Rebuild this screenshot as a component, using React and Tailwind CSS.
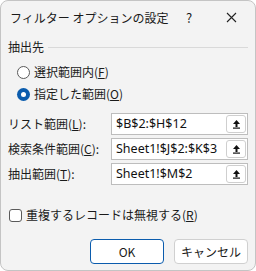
import React from 'react';

const font = { fontFamily: '"Noto Sans CJK JP", "Noto Sans", sans-serif' };

function UpButton() {
  return (
    <div className="w-[20px] h-[18px] mr-[1px] shrink-0 border border-[#cfcfcf] rounded-[3px] bg-white flex items-center justify-center">
      <svg width="9" height="10" viewBox="0 0 9 10">
        <path d="M4.5 1 L8 5 H5.5 V8 H3.5 V5 H1 Z" fill="#111" />
        <rect x="1" y="8.5" width="7" height="1.2" fill="#111" />
      </svg>
    </div>
  );
}

function RangeRow({ label, hot, rest, value }) {
  return (
    <div className="flex items-center h-[22px] mb-[3px]">
      <div className="w-[103px] text-[12px] text-[#1a1a1a] whitespace-nowrap">
        {label}(<span className="underline">{hot}</span>){rest}
      </div>
      <div className="flex-1 h-[22px] flex items-center bg-white border border-[#bdbdbd] pl-[4px]">
        <span className="flex-1 text-[12.5px] text-[#111] whitespace-nowrap overflow-hidden" style={{ fontFamily: '"Noto Sans", sans-serif' }}>{value}</span>
        <UpButton />
      </div>
    </div>
  );
}

export default function App() {
  return (
    <div className="w-[256px] h-[271px] bg-white" style={font}>
      <div className="w-full h-full bg-[#f3f3f3] border border-[#c4c4c4] rounded-[8px] overflow-hidden flex flex-col">
        <div className="h-[33px] flex items-center pl-[9px] text-[12px] text-[#1a1a1a] shrink-0">
          <span className="flex-1">フィルター オプションの設定</span>
          <span className="w-[20px] text-center mr-[27px] text-[13px]">?</span>
          <svg width="11" height="11" viewBox="0 0 11 11" className="mr-[18px]">
            <path d="M1 1 L10 10 M10 1 L1 10" stroke="#222" strokeWidth="1.1" />
          </svg>
        </div>
        <div className="px-[7px] flex flex-col">
          <div className="flex items-center gap-[4px] h-[20px] mt-[3px]">
            <span className="text-[12px] text-[#1a1a1a]">抽出先</span>
            <div className="flex-1 border-t border-[#d9d9d9]"></div>
          </div>
          <div className="pl-[9px] mt-[4px]">
            <div className="flex items-center h-[22px] gap-[4px]">
              <span className="w-[13px] h-[13px] rounded-full border border-[#5a5a5a] bg-white"></span>
              <span className="text-[12px] text-[#1a1a1a]">選択範囲内(<span className="underline">F</span>)</span>
            </div>
            <div className="flex items-center h-[22px] gap-[4px]">
              <span className="w-[13px] h-[13px] rounded-full bg-[#0b5cad] flex items-center justify-center">
                <span className="w-[5px] h-[5px] rounded-full bg-white"></span>
              </span>
              <span className="text-[12px] text-[#1a1a1a]">指定した範囲(<span className="underline">O</span>)</span>
            </div>
          </div>
          <div className="mt-[8px]">
            <RangeRow label="リスト範囲" hot="L" rest=":" value="$B$2:$H$12" />
            <RangeRow label="検索条件範囲" hot="C" rest=":" value="Sheet1!$J$2:$K$3" />
            <RangeRow label="抽出範囲" hot="T" rest=":" value="Sheet1!$M$2" />
          </div>
          <div className="flex items-center gap-[4px] mt-[18px] pl-[1px]">
            <span className="w-[13px] h-[13px] rounded-[3px] border border-[#5a5a5a] bg-white"></span>
            <span className="text-[12px] text-[#1a1a1a]">重複するレコードは無視する(<span className="underline">R</span>)</span>
          </div>
          <div className="flex justify-end gap-[10px] mt-[15px]">
            <button className="w-[74px] h-[25px] rounded-[4px] bg-white border border-[#0b5cad] text-[12px] text-[#1a1a1a]">OK</button>
            <button className="w-[74px] h-[25px] rounded-[4px] bg-white border border-[#d0d0d0] text-[12px] text-[#1a1a1a]">キャンセル</button>
          </div>
        </div>
      </div>
    </div>
  );
}
